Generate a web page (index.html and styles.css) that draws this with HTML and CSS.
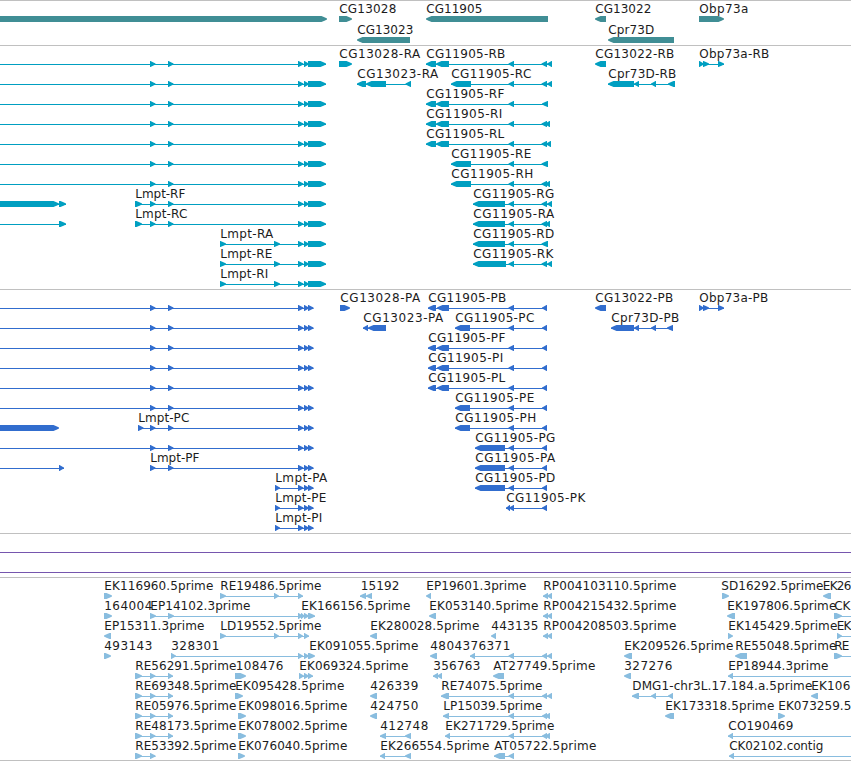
FILE: index.html
```
<!DOCTYPE html>
<html lang="en">
<head>
    <meta charset="UTF-8">
    <title>Genome browser</title>
    <link rel="stylesheet" href="styles.css">
</head>
<body>
    <div class="browser">
        <section class="track genes"><svg id="genes"></svg></section>
        <section class="track transcripts"><svg id="transcripts"></svg></section>
        <section class="track proteins"><svg id="proteins"></svg></section>
        <section class="track spans">
            <div class="span-line"></div>
            <div class="span-line"></div>
        </section>
        <section class="track ests"><svg id="ests"></svg></section>
    </div>
    <script src="script.js"></script>
</body>
</html>
```
FILE: styles.css
```
body {
    margin: 0;
    background: #fff;
    overflow: hidden;
}
.browser {
    width: 851px;
    border-bottom: 1px solid #c0c0c0;
}
.track {
    box-sizing: border-box;
    border-top: 1px solid #c0c0c0;
    overflow: hidden;
}
.track svg {
    display: block;
    width: 100%;
    height: 100%;
}
.track text {
    font-family: "DejaVu Sans", sans-serif;
    font-size: 12px;
    fill: #1c1c1c;
}
.genes {
    height: 45px;
    fill: #408e95;
}
.transcripts {
    height: 244px;
    fill: #009fc1;
}
.proteins {
    height: 244px;
    fill: #316dce;
}
.spans {
    height: 44px;
    display: flex;
    flex-direction: column;
    gap: 19px;
    padding-top: 18px;
}
.span-line {
    height: 1px;
    background: #7656ae;
}
.ests {
    height: 183px;
    fill: #89bddf;
}
```
FILE: script.js
```
const SVG = 'http://www.w3.org/2000/svg';

// [row, strand, exons, label, label start, label end]
const genes = [
    [0, '+', '-10:327'],
    [0, '+', '339:352', 'CG13028', 339, 396],
    [0, '-', '426:548', 'CG11905', 426, 482],
    [0, '-', '595:606', 'CG13022', 595, 651],
    [0, '+', '699:724', 'Obp73a', 699, 748],
    [1, '-', '357:410', 'CG13023', 357, 413],
    [1, '-', '608:674', 'Cpr73D', 608, 654]
];

const rEnd = ' 298:303.5 304:309 308:326';
const rMid = ' 150:155.5 168:173.5' + rEnd;
const transcripts = [
    [7, '+', '-10:59 59:66'],
    [7, '+', '135:142' + rMid, 'Lmpt-RF', 135, 185],
    [8, '+', '-10:-5 59:66'],
    [8, '+', '135:142' + rMid, 'Lmpt-RC', 135, 187],
    [9, '+', '220:226 274:280' + rEnd, 'Lmpt-RA', 220, 273],
    [10, '+', '220:226 274:280' + rEnd, 'Lmpt-RE', 220, 272],
    [11, '+', '220:226 274:280' + rEnd, 'Lmpt-RI', 220, 268],
    [0, '+', '339:352', 'CG13028-RA', 339, 420],
    [1, '-', '357:366 366:386 405.5:411', 'CG13023-RA', 357, 438],
    [0, '-', '426:436 436:449 508.5:514 541.5:547 547:552', 'CG11905-RB', 426, 505],
    [1, '-', '451:471 508.5:514 541.5:547 547:552', 'CG11905-RC', 451, 531],
    [2, '-', '426:436 436:449 508.5:514 542:548', 'CG11905-RF', 426, 504],
    [3, '-', '426:436 436:449 508.5:514 541.5:547 545:550', 'CG11905-RI', 426, 502],
    [4, '-', '426:436 436:449 508.5:514 541.5:547 546:551', 'CG11905-RL', 426, 504],
    [5, '-', '451:471 508.5:514 541.5:548', 'CG11905-RE', 451, 531],
    [6, '-', '451:471 508.5:514 541.5:547 545:550', 'CG11905-RH', 451, 533],
    [7, '-', '473:505 508.5:514 541.5:547 547:552', 'CG11905-RG', 473, 554],
    [8, '-', '473:505 508.5:514 541.5:547 545:550', 'CG11905-RA', 473, 554],
    [9, '-', '473:505 508.5:514 541.5:548', 'CG11905-RD', 473, 554],
    [10, '-', '473:506 508.5:514 541.5:547 547:552', 'CG11905-RK', 473, 553],
    [0, '-', '595:606', 'CG13022-RB', 595, 674],
    [1, '-', '608:634 634:639 651:656 668:675', 'Cpr73D-RB', 608, 676],
    [0, '+', '699:704 703:709 718:724', 'Obp73a-RB', 699, 769]
];
for (let row = 0; row < 7; row++) {
    transcripts.push([row, '+', '-10:-5' + rMid]);
}

const pEnd = ' 298:303.5 304:309 308:313.5';
const pMid = ' 150:155.5 168:173.5' + pEnd;
const proteins = [
    [6, '+', '-10:59'],
    [6, '+', '138:143.5' + pMid, 'Lmpt-PC', 138, 189],
    [7, '+', '-10:-5' + pMid],
    [8, '+', '-10:-5 59:64'],
    [8, '+', pMid.trim(), 'Lmpt-PF', 150, 199],
    [9, '+', '275:280' + pEnd, 'Lmpt-PA', 275, 327],
    [10, '+', '275:280' + pEnd, 'Lmpt-PE', 275, 326],
    [11, '+', '275:280' + pEnd, 'Lmpt-PI', 275, 322],
    [0, '+', '340:350', 'CG13028-PA', 340, 420],
    [1, '-', '363:368 368:386', 'CG13023-PA', 363, 443],
    [0, '-', '428:436 437:449 508.5:514 542:547', 'CG11905-PB', 428, 506],
    [1, '-', '455:470 508.5:514 542:547', 'CG11905-PC', 455, 534],
    [2, '-', '428:436 437:449 508.5:514 542:547', 'CG11905-PF', 428, 505],
    [3, '-', '428:436 437:449 508.5:514 542:547', 'CG11905-PI', 428, 503],
    [4, '-', '428:436 437:449 508.5:514 542:547', 'CG11905-PL', 428, 505],
    [5, '-', '455:470 508.5:514 542:547', 'CG11905-PE', 455, 534],
    [6, '-', '455:470 508.5:514 542:547', 'CG11905-PH', 455, 536],
    [7, '-', '475:505 508.5:514 542:547', 'CG11905-PG', 475, 555],
    [8, '-', '475:505 508.5:514 542:547', 'CG11905-PA', 475, 555],
    [9, '-', '475:505 508.5:514 542:547', 'CG11905-PD', 475, 555],
    [10, '-', '506:510 509:514 542:547', 'CG11905-PK', 506, 585],
    [0, '-', '595:606', 'CG13022-PB', 595, 673],
    [1, '-', '611:634 634:639 651:656 667:673', 'Cpr73D-PB', 611, 679],
    [0, '+', '699:704 703:709 718:724', 'Obp73a-PB', 699, 768]
];
for (let row = 0; row < 6; row++) {
    proteins.push([row, '+', '-10:-5' + pMid]);
}

const ests = [
    [0, '+', '104:112', 'EK116960.5prime', 104, 213],
    [0, '+', '220:226 274:279 298:303', 'RE19486.5prime', 220, 321],
    [0, '-', '360:366 366:372', '15192', 360.5, 399],
    [0, '-', '426:431', 'EP19601.3prime', 426, 526],
    [0, '-', '543:548 547:552', 'RP004103110.5prime', 543, 676],
    [0, '+', '722:729', 'SD16292.5prime', 721, 823],
    [0, '-', '823:831', 'EK26', 822.5, 851],
    [1, '+', '104:112', '164004', 104, 152],
    [1, '+', '150:156 168:174 298:303', 'EP14102.3prime', 150, 250],
    [1, '+', '301:305 304:309 308:315', 'EK166156.5prime', 301, 410],
    [1, '-', '429:436', 'EK053140.5prime', 429, 538],
    [1, '-', '543:548 547:552', 'RP004215432.5prime', 543, 676],
    [1, '-', '727:735', 'EK197806.5prime', 727, 836],
    [1, '+', '834:842 870:875', 'CK', 834, 850],
    [2, '-', '104:111', 'EP15311.3prime', 104, 204],
    [2, '+', '220:226 274:279 298:303 304:309', 'LD19552.5prime', 220, 321],
    [2, '-', '370:377', 'EK280028.5prime', 370, 479],
    [2, '-', '491:496', '443135', 491, 538],
    [2, '-', '543:548 547:552', 'RP004208503.5prime', 543, 676],
    [2, '+', '728:733', 'EK145429.5prime', 728, 837],
    [2, '+', '837:842 870:875', 'EK', 836.5, 851],
    [3, '+', '104:111', '493143', 104, 152],
    [3, '+', '171:176 298:303 304:309', '328301', 171, 219],
    [3, '+', '308:315', 'EK091055.5prime', 309, 418],
    [3, '-', '430:437', '4804376371', 430, 510],
    [3, '-', '470:475 508.5:514 542:547 547:552'],
    [3, '-', '624:632', 'EK209526.5prime', 624, 733],
    [3, '-', '735:747', 'RE55048.5prime', 735, 836],
    [3, '+', '834:842 870:875', 'RE', 834, 849],
    [4, '+', '135:142 150:155.5 168:173', 'RE56291.5prime', 135, 236],
    [4, '+', '235:246', '108476', 235.5, 283],
    [4, '+', '299:304 304:309 308:313', 'EK069324.5prime', 299, 408],
    [4, '-', '433:438 437:442', '356763', 433, 480],
    [4, '-', '493:504', 'AT27749.5prime', 493, 595],
    [4, '-', '624:631', '327276', 624, 672],
    [4, '-', '728:733 870:875', 'EP18944.3prime', 728, 828],
    [5, '+', '135:142 150:155.5 168:173', 'RE69348.5prime', 135, 236],
    [5, '+', '235:243', 'EK095428.5prime', 235, 344],
    [5, '-', '370:377', '426339', 370, 418],
    [5, '-', '441:449 508.5:514 542:547 547:552', 'RE74075.5prime', 441, 542],
    [5, '-', '632:639 651:656 668:673', 'DMG1-chr3L.17.184.a.5prime', 632, 812],
    [5, '-', '811:818', 'EK106', 811, 850],
    [6, '+', '135:142 150:155.5 168:173', 'RE05976.5prime', 135, 236],
    [6, '+', '238:246', 'EK098016.5prime', 238, 347],
    [6, '-', '370:377', '424750', 370, 418],
    [6, '-', '443:449 508.5:514 542:547 545:550', 'LP15039.5prime', 443, 542],
    [6, '-', '665:674', 'EK173318.5prime', 665, 774],
    [6, '+', '778:785', 'EK073259.5', 778, 851],
    [7, '+', '135:142 150:155.5 168:173', 'RE48173.5prime', 135, 236],
    [7, '+', '238:246', 'EK078002.5prime', 238, 347],
    [7, '-', '380:386 405:411', '412748', 380, 428],
    [7, '-', '445:450 508.5:514 542:547 545:550', 'EK271729.5prime', 445, 554],
    [7, '-', '728:733 870:875', 'CO190469', 728, 793],
    [8, '+', '135:142 150:155.5', 'RE53392.5prime', 135, 236],
    [8, '+', '238:245', 'EK076040.5prime', 238, 347],
    [8, '-', '380:385 405:411', 'EK266554.5prime', 380, 489],
    [8, '-', '494:505 508.5:514', 'AT05722.5prime', 494, 596],
    [8, '-', '729:734 870:875', 'CK02102.contig', 729, 823]
];

function add(svg, name, attrs) {
    const el = document.createElementNS(SVG, name);
    for (const key in attrs) el.setAttribute(key, attrs[key]);
    svg.appendChild(el);
    return el;
}

function drawExon(svg, x1, x2, y, strand) {
    const head = Math.min(5.5, x2 - x1 - 0.5);
    const tip = strand === '+' ? x2 : x1;
    const tail = strand === '+' ? x1 : x2;
    const back = strand === '+' ? -1 : 1;
    const points = [
        [tail, y],
        [tip + back * head, y],
        [tip + back * 1.5, y + 1.7],
        [tip, y + 2.4],
        [tip, y + 3.6],
        [tip + back * 1.5, y + 4.3],
        [tip + back * head, y + 6],
        [tail, y + 6]
    ];
    add(svg, 'polygon', { points: points.join(' ') });
}

function drawTrack(id, features, pitch) {
    const svg = document.getElementById(id);
    features.forEach(([row, strand, exons, label, start, end]) => {
        const y = 15 + row * pitch;
        const blocks = exons.split(' ').map(e => e.split(':').map(Number));
        const first = blocks[0][0];
        const last = blocks[blocks.length - 1][1];
        // intron line
        if (blocks.length > 1) {
            add(svg, 'rect', { x: first, y: y + 3, width: last - first, height: 1 });
        }
        blocks.forEach(([x1, x2]) => drawExon(svg, x1, x2, y, strand));
        if (label) {
            const text = add(svg, 'text', { x: start + 0.3, y: y - 3, textLength: end - start });
            text.textContent = label;
        }
    });
}

drawTrack('genes', genes, 21);
drawTrack('transcripts', transcripts, 20);
drawTrack('proteins', proteins, 20);
drawTrack('ests', ests, 20);
```
